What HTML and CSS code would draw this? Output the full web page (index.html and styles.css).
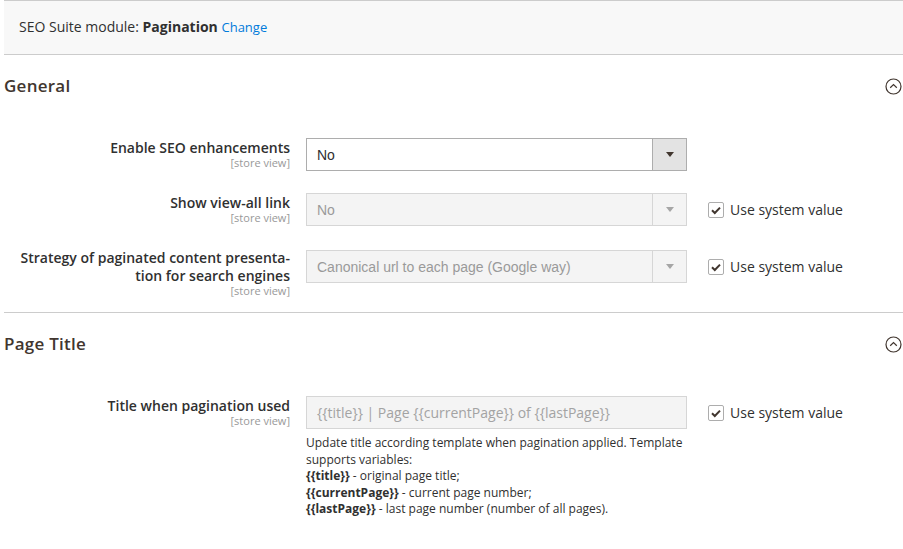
FILE: index.html
```html
<!DOCTYPE html>
<html lang="en">
<head>
<meta charset="utf-8">
<title>SEO Suite - Pagination</title>
<link rel="stylesheet" href="styles.css">
</head>
<body>
<div class="page">
  <div class="module-bar">SEO Suite module: <strong>Pagination</strong> <a class="change" href="#">Change</a></div>

  <section class="section">
    <div class="section-head">
      <h2>General</h2>
      <span class="toggle"><svg width="17" height="17" viewBox="0 0 17 17"><circle cx="8.5" cy="8.5" r="7.5" fill="none" stroke="#41362f" stroke-width="1.2"/><path d="M5.2 9.8 L8.5 6.6 L11.8 9.8" fill="none" stroke="#41362f" stroke-width="1.2"/></svg></span>
    </div>
    <div class="fields">
      <div class="row">
        <div class="label"><span class="name">Enable SEO enhancements</span><span class="scope">[store view]</span></div>
        <div class="control"><div class="select"><span class="val">No</span><span class="arrow"><i></i></span></div></div>
      </div>
      <div class="row">
        <div class="label"><span class="name">Show view-all link</span><span class="scope">[store view]</span></div>
        <div class="control"><div class="select disabled"><span class="val">No</span><span class="arrow"><i></i></span></div></div>
        <label class="system"><span class="check"><svg width="14" height="14" viewBox="0 0 14 14"><path d="M3 7.2 L5.8 10 L11 4.6" fill="none" stroke="#41362f" stroke-width="2"/></svg></span>Use system value</label>
      </div>
      <div class="row">
        <div class="label"><span class="name">Strategy of paginated content presenta&shy;tion for search engines</span><span class="scope">[store view]</span></div>
        <div class="control shifted"><div class="select disabled"><span class="val">Canonical url to each page (Google way)</span><span class="arrow"><i></i></span></div></div>
        <label class="system shifted"><span class="check"><svg width="14" height="14" viewBox="0 0 14 14"><path d="M3 7.2 L5.8 10 L11 4.6" fill="none" stroke="#41362f" stroke-width="2"/></svg></span>Use system value</label>
      </div>
    </div>
  </section>

  <section class="section bordered">
    <div class="section-head">
      <h2>Page Title</h2>
      <span class="toggle"><svg width="17" height="17" viewBox="0 0 17 17"><circle cx="8.5" cy="8.5" r="7.5" fill="none" stroke="#41362f" stroke-width="1.2"/><path d="M5.2 9.8 L8.5 6.6 L11.8 9.8" fill="none" stroke="#41362f" stroke-width="1.2"/></svg></span>
    </div>
    <div class="fields">
      <div class="row">
        <div class="label"><span class="name">Title when pagination used</span><span class="scope">[store view]</span></div>
        <div class="control-col">
          <div class="control"><div class="input disabled">{{title}} | Page {{currentPage}} of {{lastPage}}</div></div>
          <div class="note">Update title according template when pagination applied. Template supports variables:<br><b>{{title}}</b> - original page title;<br><b>{{currentPage}}</b> - current page number;<br><b>{{lastPage}}</b> - last page number (number of all pages).</div>
        </div>
        <label class="system"><span class="check"><svg width="14" height="14" viewBox="0 0 14 14"><path d="M3 7.2 L5.8 10 L11 4.6" fill="none" stroke="#41362f" stroke-width="2"/></svg></span>Use system value</label>
      </div>
    </div>
  </section>
</div>
</body>
</html>
```

FILE: styles.css
```css
* { box-sizing: border-box; }
html, body { margin: 0; padding: 0; background: #fff; }
body {
  font-family: "Open Sans", "Liberation Sans", sans-serif;
  color: #303030;
  font-size: 14px;
  width: 903px;
  overflow: hidden;
}
.page { padding-left: 4px; }

.module-bar {
  height: 55px;
  background: #f8f8f8;
  border-top: 1px solid #cccccc;
  border-bottom: 1px solid #cccccc;
  padding-left: 15px;
  font-size: 14px;
  line-height: 52px;
  color: #303030;
}
.module-bar strong { font-weight: 700; color: #303030; }
.module-bar .change { color: #007bdb; text-decoration: none; font-size: 13px; }

.section.bordered { border-top: 1px solid #cccccc; }
.section-head {
  height: 62px;
  display: flex;
  align-items: center;
  justify-content: space-between;
}
.section-head h2 {
  margin: 0 0 1px;
  font-size: 17px;
  font-weight: 600;
  color: #41362f;
  letter-spacing: 0.25px;
}
.toggle { display: flex; margin-right: 1px; }

.fields {
  padding-top: 21px;
  padding-bottom: 15px;
  display: flex;
  flex-direction: column;
  gap: 22px;
}
.row {
  display: grid;
  grid-template-columns: 286px 381px auto;
  column-gap: 16px;
  align-items: start;
}
.label {
  display: flex;
  flex-direction: column;
  align-items: flex-end;
  text-align: right;
  padding-top: 1px;
}
.label .name {
  font-size: 14px;
  font-weight: 600;
  line-height: 18px;
  color: #303030;
}
.label .scope {
  font-size: 11px;
  line-height: 12px;
  color: #999999;
}

.control { height: 33px; }
.shifted { margin-top: 2px; }
.select {
  height: 33px;
  border: 1px solid #adadad;
  background: #fff;
  display: flex;
  align-items: stretch;
  font-family: "Liberation Sans", Arial, sans-serif;
  font-size: 14px;
  color: #303030;
}
.select .val {
  flex: 1;
  padding-left: 10px;
  display: flex;
  align-items: center;
}
.select .arrow {
  width: 34px;
  background: #e3e3e3;
  border-left: 1px solid #adadad;
  display: flex;
  align-items: center;
  justify-content: center;
}
.select .arrow i {
  width: 0; height: 0;
  border-left: 4px solid transparent;
  border-right: 4px solid transparent;
  border-top: 5px solid #41362f;
}
.select.disabled {
  background: #f4f4f4;
  border-color: #d6d6d6;
  color: #9a9a9a;
}
.select.disabled .arrow {
  background: #f4f4f4;
  border-left-color: #d6d6d6;
}
.select.disabled .arrow i { border-top-color: #a6a6a6; }

.input {
  height: 33px;
  border: 1px solid #d6d6d6;
  background: #f4f4f4;
  color: #a3a3a3;
  font-size: 14px;
  padding-left: 10px;
  display: flex;
  align-items: center;
}

.note {
  margin-top: 6px;
  font-size: 12px;
  line-height: 16.5px;
  color: #303030;
}
.note b { font-weight: 700; }

.system {
  margin-left: 5px;
  height: 33px;
  display: flex;
  align-items: center;
  font-size: 14px;
  color: #303030;
}
.check {
  width: 16px;
  height: 16px;
  border: 1px solid #adadad;
  border-radius: 2px;
  background: #fff;
  display: flex;
  align-items: center;
  justify-content: center;
  margin-right: 6px;
  margin-top: 1px;
}
```
